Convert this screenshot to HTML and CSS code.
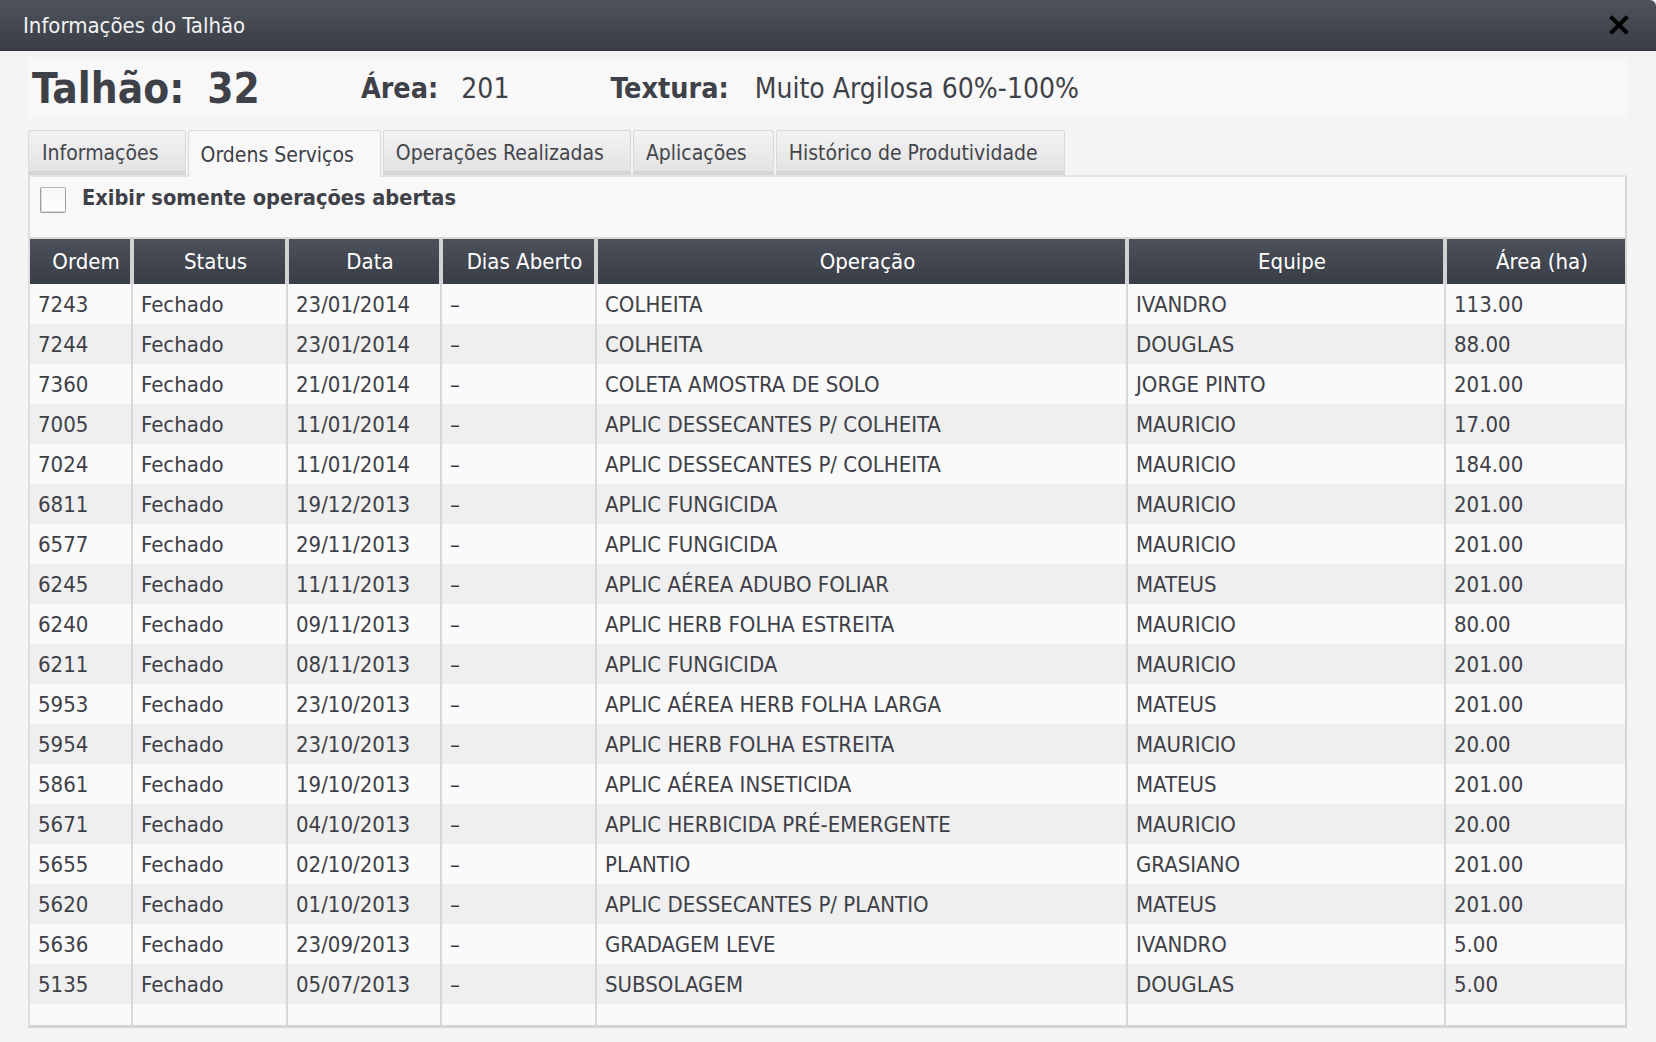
FILE: index.html
```html
<!DOCTYPE html>
<html lang="pt">
<head>
<meta charset="utf-8">
<title>Informações do Talhão</title>
<link rel="stylesheet" href="styles.css">
</head>
<body>
<div class="window">
  <div class="titlebar">
    <span class="title">Informações do Talhão</span>
    <svg class="close" width="20" height="20" viewBox="0 0 20 20"><path d="M3 3 L17 17 M17 3 L3 17" stroke="#000" stroke-width="4" stroke-linecap="square"/></svg>
  </div>
  <div class="main">
    <div class="info">
      <div class="group"><span class="big-label">Talhão:</span><span class="big-value">32</span></div>
      <div class="group"><span class="label">Área:</span><span class="value">201</span></div>
      <div class="group wide"><span class="label">Textura:</span><span class="value">Muito Argilosa 60%-100%</span></div>
    </div>
    <div class="tabs">
      <div class="tab">Informações</div>
      <div class="tab active">Ordens Serviços</div>
      <div class="tab">Operações Realizadas</div>
      <div class="tab">Aplicações</div>
      <div class="tab">Histórico de Produtividade</div>
    </div>
    <div class="panel">
      <div class="filter">
        <span class="checkbox"></span>
        <span class="filter-label">Exibir somente operações abertas</span>
      </div>
      <table class="grid">
        <colgroup>
          <col class="c-ordem"><col class="c-status"><col class="c-data"><col class="c-dias"><col class="c-op"><col class="c-equipe"><col class="c-area">
        </colgroup>
        <thead>
          <tr><th>Ordem</th><th>Status</th><th>Data</th><th>Dias Aberto</th><th>Operação</th><th>Equipe</th><th>Área (ha)</th></tr>
        </thead>
        <tbody>
          <tr><td>7243</td><td>Fechado</td><td>23/01/2014</td><td>–</td><td>COLHEITA</td><td>IVANDRO</td><td>113.00</td></tr>
          <tr><td>7244</td><td>Fechado</td><td>23/01/2014</td><td>–</td><td>COLHEITA</td><td>DOUGLAS</td><td>88.00</td></tr>
          <tr><td>7360</td><td>Fechado</td><td>21/01/2014</td><td>–</td><td>COLETA AMOSTRA DE SOLO</td><td>JORGE PINTO</td><td>201.00</td></tr>
          <tr><td>7005</td><td>Fechado</td><td>11/01/2014</td><td>–</td><td>APLIC DESSECANTES P/ COLHEITA</td><td>MAURICIO</td><td>17.00</td></tr>
          <tr><td>7024</td><td>Fechado</td><td>11/01/2014</td><td>–</td><td>APLIC DESSECANTES P/ COLHEITA</td><td>MAURICIO</td><td>184.00</td></tr>
          <tr><td>6811</td><td>Fechado</td><td>19/12/2013</td><td>–</td><td>APLIC FUNGICIDA</td><td>MAURICIO</td><td>201.00</td></tr>
          <tr><td>6577</td><td>Fechado</td><td>29/11/2013</td><td>–</td><td>APLIC FUNGICIDA</td><td>MAURICIO</td><td>201.00</td></tr>
          <tr><td>6245</td><td>Fechado</td><td>11/11/2013</td><td>–</td><td>APLIC AÉREA ADUBO FOLIAR</td><td>MATEUS</td><td>201.00</td></tr>
          <tr><td>6240</td><td>Fechado</td><td>09/11/2013</td><td>–</td><td>APLIC HERB FOLHA ESTREITA</td><td>MAURICIO</td><td>80.00</td></tr>
          <tr><td>6211</td><td>Fechado</td><td>08/11/2013</td><td>–</td><td>APLIC FUNGICIDA</td><td>MAURICIO</td><td>201.00</td></tr>
          <tr><td>5953</td><td>Fechado</td><td>23/10/2013</td><td>–</td><td>APLIC AÉREA HERB FOLHA LARGA</td><td>MATEUS</td><td>201.00</td></tr>
          <tr><td>5954</td><td>Fechado</td><td>23/10/2013</td><td>–</td><td>APLIC HERB FOLHA ESTREITA</td><td>MAURICIO</td><td>20.00</td></tr>
          <tr><td>5861</td><td>Fechado</td><td>19/10/2013</td><td>–</td><td>APLIC AÉREA INSETICIDA</td><td>MATEUS</td><td>201.00</td></tr>
          <tr><td>5671</td><td>Fechado</td><td>04/10/2013</td><td>–</td><td>APLIC HERBICIDA PRÉ-EMERGENTE</td><td>MAURICIO</td><td>20.00</td></tr>
          <tr><td>5655</td><td>Fechado</td><td>02/10/2013</td><td>–</td><td>PLANTIO</td><td>GRASIANO</td><td>201.00</td></tr>
          <tr><td>5620</td><td>Fechado</td><td>01/10/2013</td><td>–</td><td>APLIC DESSECANTES P/ PLANTIO</td><td>MATEUS</td><td>201.00</td></tr>
          <tr><td>5636</td><td>Fechado</td><td>23/09/2013</td><td>–</td><td>GRADAGEM LEVE</td><td>IVANDRO</td><td>5.00</td></tr>
          <tr><td>5135</td><td>Fechado</td><td>05/07/2013</td><td>–</td><td>SUBSOLAGEM</td><td>DOUGLAS</td><td>5.00</td></tr>
          <tr class="filler"><td></td><td></td><td></td><td></td><td></td><td></td><td></td></tr>
        </tbody>
      </table>
    </div>
  </div>
</div>
</body>
</html>
```

FILE: styles.css
```css
html, body {
  margin: 0;
  padding: 0;
}
body {
  background: #f4f4f4;
  font-family: "DejaVu Sans Condensed", "DejaVu Sans", sans-serif;
  font-stretch: condensed;
  color: #3f4148;
  width: 1656px;
  height: 1042px;
  overflow: hidden;
}
.window {
  display: flex;
  flex-direction: column;
}
.titlebar {
  height: 50px;
  border-bottom: 1px solid #2e3138;
  background: linear-gradient(#4d525c, #3a3e46);
  display: flex;
  align-items: center;
  justify-content: space-between;
  padding: 0 27px 0 23px;
  border-top-right-radius: 6px;
}
.title {
  color: #f2f2f2;
  font-size: 22px;
}
.close {
  display: block;
}
.main {
  padding: 7px 29px 0 28px;
}
.info {
  height: 60px;
  background: #f8f8f8;
  display: flex;
  align-items: center;
  padding-left: 4px;
  gap: 101px;
}
.group {
  display: flex;
  align-items: center;
  gap: 23px;
}
.group.wide {
  gap: 26px;
}
.big-label, .big-value {
  font-size: 42px;
  font-weight: bold;
  color: #3f4148;
}
.label {
  font-size: 28.5px;
  font-weight: bold;
  color: #3f4148;
}
.value {
  font-size: 28px;
  color: #3f4148;
}
.tabs {
  margin-top: 12px;
  height: 47px;
  display: flex;
  align-items: flex-start;
  gap: 2px;
  border-bottom: 2px solid #e4e4e4;
  box-sizing: border-box;
}
.tab {
  height: 45px;
  box-sizing: border-box;
  padding: 10px 26px 0 12px;
  font-size: 21px;
  color: #44464c;
  background: linear-gradient(#f3f3f3, #e3e3e3);
  border: 1px solid #d9d9d9;
  border-bottom: 4px solid #d6d6d6;
  border-top-left-radius: 3px;
  border-top-right-radius: 3px;
}
.tab:first-child {
  padding-left: 13px;
}
.active {
  height: 47px;
  margin-bottom: -2px;
  background: #f8f8f8;
  border-bottom: none;
  padding-top: 12px;
  color: #3f4148;
}
.panel {
  background: #f8f8f8;
  border-left: 2px solid #dedede;
  border-right: 2px solid #d5d5d5;
  border-bottom: 3px solid #d4d4d4;
}
.filter {
  height: 60px;
  box-sizing: border-box;
  display: flex;
  align-items: flex-start;
  padding: 10px 0 0 10px;
  gap: 16px;
}
.checkbox {
  width: 26px;
  height: 26px;
  box-sizing: border-box;
  border: 1px solid #a0a0a0;
  border-top-color: #b8b8b8;
  background: linear-gradient(#f6f6f6, #ffffff);
  box-shadow: inset 1px -1px 0 #d8d8d8;
  border-radius: 2px;
}
.filter-label {
  font-size: 21.6px;
  font-weight: bold;
  color: #3f4148;
  margin-top: -2px;
}
.grid {
  width: 100%;
  border-collapse: collapse;
  table-layout: fixed;
  font-size: 22px;
  border-top: 2px solid #dcdcdc;
}
.c-ordem { width: 102px; }
.c-status { width: 155px; }
.c-data { width: 154px; }
.c-dias { width: 155px; }
.c-op { width: 531px; }
.c-equipe { width: 318px; }
.c-area { width: 180px; }
.grid th {
  height: 46px;
  padding: 0 0 0 12px;
  background: linear-gradient(#4b505a, #393d45);
  color: #ffffff;
  font-weight: normal;
  text-align: center;
  border-right: 4px solid #d2d2d2;
  box-sizing: border-box;
}
.grid th:last-child {
  border-right: none;
}
.grid td {
  height: 40px;
  padding: 0 0 0 8px;
  border-right: 2px solid #d8d8d8;
  color: #3e4047;
  white-space: nowrap;
  overflow: hidden;
}
.grid td:last-child {
  border-right: none;
}
.grid tbody tr:nth-child(odd) {
  background: #fafafa;
}
.grid tbody tr:nth-child(even) {
  background: #efefef;
}
.grid tbody tr.filler td {
  height: 21px;
}
```
